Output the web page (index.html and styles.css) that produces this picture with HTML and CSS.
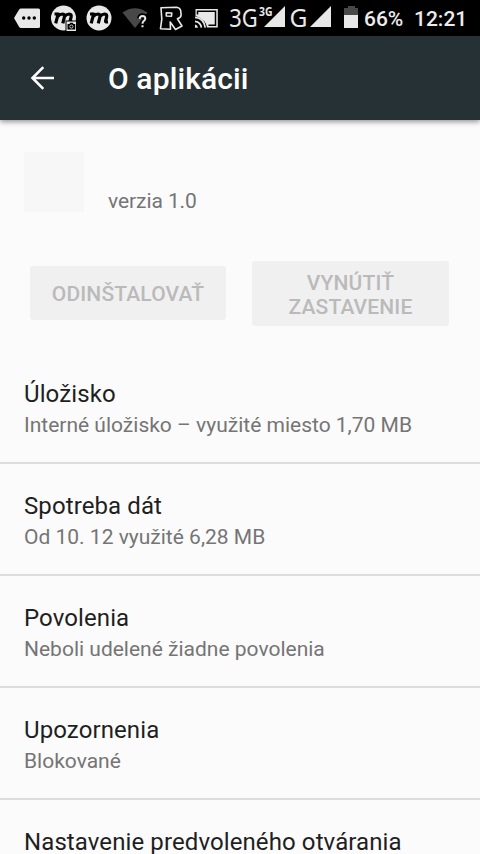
FILE: index.html
```html
<!DOCTYPE html>
<html lang="sk">
<head>
<meta charset="utf-8">
<title>O aplikácii</title>
<link rel="stylesheet" href="styles.css">
</head>
<body>
<div class="status">
  <svg class="notifications" width="228" height="36" viewBox="0 0 228 36">
    <path fill="#e8e8e8" d="M14 18l5-8.300q.8-1.200 2-1.200h17.500q1.500 0 1.500 1.500v16.500q0 1.500-1.500 1.500H21q-1.200 0-2-1.200z"/>
    <g fill="#000"><circle cx="23.700" cy="18" r="1.700"/><circle cx="29" cy="18" r="1.700"/><circle cx="34.300" cy="18" r="1.700"/></g>
    <g id="m">
      <circle cx="63.500" cy="18" r="12.500" fill="#e8e8e8"/>
      <path fill="none" stroke="#000" stroke-width="3.200" stroke-linejoin="round" d="M54.500 14h3.300M58.500 12.600l-2.800 10.800M57.600 16.500q2.700-2.600 5-2.500 2.500.3 1.800 3l-1.600 6.400M64.300 16.500q2.700-2.600 5-2.500 2.500.3 1.800 3l-1.100 4.300q-.2.900 2.500.6"/>
    </g>
    <use href="#m" x="35.500"/>
    <rect x="65.500" y="20.500" width="11" height="11" fill="#000"/>
    <rect x="66.500" y="21.500" width="9.500" height="9.500" fill="#e8e8e8"/>
    <path d="M67.500 24h2l.8-1.300h2.400l.8 1.300h1.700v5.500h-7.700z"/>
    <circle cx="71.400" cy="26.600" r="1.600" fill="none" stroke="#e8e8e8" stroke-width=".8"/>
    <path fill="#484848" d="M122.500 12.500q12.500-8.500 25 0l-12.500 15.500z"/>
    <path fill="none" stroke="#000" stroke-width="5" d="M139.500 18.500q.4-2.800 3-2.800 2.800.1 2.800 2.600 0 1.500-1.500 2.600-1.300 1-1.300 2.700M142.500 25v2"/>
    <path fill="none" stroke="#e8e8e8" stroke-width="2" d="M139.600 18.800q.3-2.900 3-2.900 2.700.1 2.700 2.600 0 1.400-1.500 2.500-1.300 1-1.300 2.800M142.500 25.300v2"/>
    <path fill="none" stroke="#e8e8e8" stroke-width="1.600" stroke-linejoin="round" d="M161 7.800l15.500-.6q3.500.3 4.200 3.500l.4 4.300q0 2.500-3.700 3.800l4.600 7.200-6.500 3.500-5.300-7.500.3 7.300-10-.6 1.300-9.500zM166.300 12.800l5.500.2-.3 3.300-5.200-.3z"/>
    <path fill="#e8e8e8" d="M195.500 9h22.300v18.500H207q-1-8-11.500-11.500z"/>
    <path fill="none" stroke="#000" stroke-width="1.500" d="M197.500 14.500v-3.300h18v14h-7"/>
    <path fill="none" stroke="#e8e8e8" stroke-width="1.700" d="M195 17.400q9 .8 10.200 10.300M195 21.300q5.800.7 6.400 6.400"/>
    <path fill="#e8e8e8" d="M195 24.500q2.600.5 3 3.200h-3z"/>
  </svg>
  <svg class="signals" width="134" height="36" viewBox="228 0 134 36">
    <g fill="#e8e8e8">
      <text class="net" x="229.300" y="27" textLength="28.500" lengthAdjust="spacingAndGlyphs">3G</text>
      <text class="net-small" x="259" y="15.500" textLength="13.500" lengthAdjust="spacingAndGlyphs">3G</text>
      <path d="M264 27h21V6z"/>
      <text class="net" x="289.500" y="27" textLength="18" lengthAdjust="spacingAndGlyphs">G</text>
      <path d="M310 27h21V6z"/>
      <path fill="#484848" d="M348 6h7v2h3v7h-14V8h4z"/>
      <path d="M344 15h14v13h-14z"/>
    </g>
  </svg>
  <span class="percent">66%</span>
  <span class="clock">12:21</span>
</div>
<header class="appbar">
  <svg class="back" width="26" height="26" viewBox="0 0 26 26"><path d="M25 13H3.500M14.300 2.200L3.500 13l10.800 10.800"/></svg>
  <h1>O aplikácii</h1>
</header>
<main>
  <section class="app">
    <div class="app-icon"></div>
    <p class="version">verzia 1.0</p>
  </section>
  <section class="actions">
    <button class="uninstall" disabled>ODINŠTALOVAŤ</button>
    <button class="force-stop" disabled>VYNÚTIŤ ZASTAVENIE</button>
  </section>
  <ul class="list">
    <li><h2>Úložisko</h2><p>Interné úložisko – využité miesto 1,70 MB</p></li>
    <li><h2>Spotreba dát</h2><p>Od 10. 12 využité 6,28 MB</p></li>
    <li><h2>Povolenia</h2><p>Neboli udelené žiadne povolenia</p></li>
    <li><h2>Upozornenia</h2><p>Blokované</p></li>
    <li><h2>Nastavenie predvoleného otvárania</h2></li>
  </ul>
</main>
</body>
</html>
```
FILE: styles.css
```css
* { box-sizing: border-box; margin: 0; padding: 0; }
body {
  height: 854px;
  overflow: hidden;
  display: flex;
  flex-direction: column;
  background: #fbfbfb;
  font-family: Roboto, sans-serif;
  color: #1f1f1f;
}
.status {
  flex: none;
  height: 36px;
  display: flex;
  align-items: center;
  background: #000;
  color: #ececec;
  font-size: 21px;
  font-weight: 500;
  line-height: 36px;
  white-space: nowrap;
}
.status svg { flex: none; }
.net { font: 25.500px "Noto Sans", sans-serif; }
.net-small { font: bold 12px "Noto Sans", sans-serif; }
.percent, .clock { padding-top: 2px; }
.percent { width: 52px; padding-left: 2px; }
.appbar {
  flex: none;
  height: 84px;
  padding-left: 29px;
  display: flex;
  align-items: center;
  gap: 53px;
  background: #263136;
  color: #fff;
  box-shadow: 0 2px 5px rgba(0, 0, 0, .4);
  z-index: 1;
}
.back { fill: none; stroke: #fff; stroke-width: 2.6; }
h1 { padding-top: 2px; font-size: 30px; font-weight: 500; line-height: 36px; letter-spacing: .12px; }
main { flex: 1; min-height: 0; overflow: hidden; }
.app { display: flex; gap: 24px; padding: 32px 24px 0; height: 141px; }
.app-icon { width: 60px; height: 60px; background: #f7f7f7; }
.version { padding-top: 37px; letter-spacing: -.08px; }
p { font-size: 21px; line-height: 25px; color: #757575; }
.actions {
  display: grid;
  grid-template-columns: 196px 197px;
  align-items: center;
  gap: 26px;
  padding-left: 30px;
  height: 65px;
}
button {
  border: 0;
  border-radius: 3px;
  background: #f0f0f0;
  color: #bababa;
  font: 500 21px/24px Roboto, sans-serif;
  letter-spacing: .15px;
}
.uninstall { height: 54px; margin-bottom: 1px; padding: 1px 20px 0; }
.force-stop { height: 65px; padding: 2px 20px 0; }
.list { list-style: none; padding-top: 26px; }
li { height: 112px; padding: 28px 24px 0; border-bottom: 2px solid #dcdcdc; white-space: nowrap; }
h2 { font-size: 24px; font-weight: 400; line-height: 28px; margin-bottom: 5px; letter-spacing: .1px; }
```
